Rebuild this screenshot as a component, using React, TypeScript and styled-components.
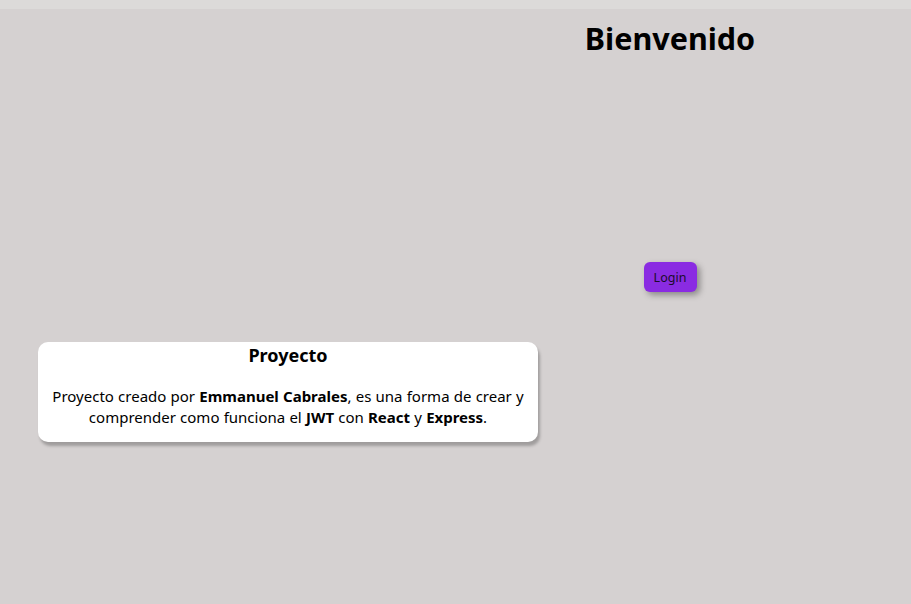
import React from "react";
import styled, { createGlobalStyle } from "styled-components";

const Global = createGlobalStyle`
  html, body { margin: 0; padding: 0; }
  body {
    background: #d5d1d1;
    font-family: "Noto Sans", "Open Sans", "DejaVu Sans", sans-serif;
    color: #000;
  }
`;

const TopBar = styled.div`
  height: 9px;
  background: #dcdad9;
`;

const Main = styled.main`
  display: grid;
  grid-template-columns: 540px 260px;
  height: 595px;
`;

const LeftCol = styled.section`
  display: flex;
  flex-direction: column;
  padding: 333px 0 0 38px;
`;

const RightCol = styled.section`
  display: flex;
  flex-direction: column;
  align-items: center;
`;

const Title = styled.h1`
  margin: 10px 0 0;
  font-size: 30.5px;
  font-weight: 700;
  line-height: 38px;
`;

const LoginButton = styled.button`
  margin-top: 205px;
  width: 53px;
  height: 30px;
  border: none;
  border-radius: 6px;
  background: #8a2be2;
  color: #1b0b2c;
  font-family: inherit;
  font-size: 12.5px;
  box-shadow: 3px 3px 6px rgba(0, 0, 0, 0.35);
  padding: 0;
  cursor: pointer;
`;

const Card = styled.div`
  width: 500px;
  box-sizing: border-box;
  background: #fff;
  border-radius: 10px;
  box-shadow: 2px 4px 3px rgba(0, 0, 0, 0.25);
  padding: 1px 12px 14px;
  text-align: center;
`;

const CardTitle = styled.h3`
  margin: 0;
  font-size: 18px;
  line-height: 24px;
  font-weight: 700;
`;

const CardText = styled.p`
  margin: 19px 0 0;
  font-size: 15px;
  line-height: 21px;
  word-spacing: 0.3px;
`;

export default function App() {
  return (
    <>
      <Global />
      <TopBar />
      <Main>
        <LeftCol>
          <Card>
            <CardTitle>Proyecto</CardTitle>
            <CardText>
              Proyecto creado por <b>Emmanuel Cabrales</b>, es una forma de crear y
              comprender como funciona el <b>JWT</b> con <b>React</b> y <b>Express</b>.
            </CardText>
          </Card>
        </LeftCol>
        <RightCol>
          <Title>Bienvenido</Title>
          <LoginButton>Login</LoginButton>
        </RightCol>
      </Main>
    </>
  );
}
